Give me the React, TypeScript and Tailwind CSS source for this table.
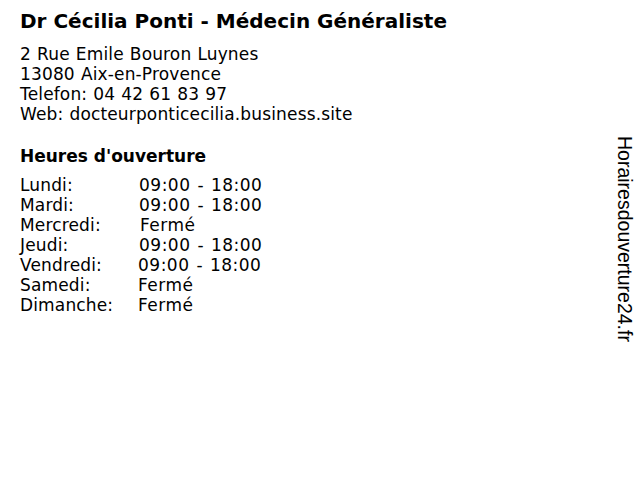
import React from 'react';

const hours: { day: string; time: string; pad: string }[] = [
  { day: 'Lundi:', time: '09:00 - 18:00', pad: 'pl-[119px]' },
  { day: 'Mardi:', time: '09:00 - 18:00', pad: 'pl-[119px]' },
  { day: 'Mercredi:', time: 'Fermé', pad: 'pl-[120px]' },
  { day: 'Jeudi:', time: '09:00 - 18:00', pad: 'pl-[119px]' },
  { day: 'Vendredi:', time: '09:00 - 18:00', pad: 'pl-[118px]' },
  { day: 'Samedi:', time: 'Fermé', pad: 'pl-[118px]' },
  { day: 'Dimanche:', time: 'Fermé', pad: 'pl-[118px]' }
];

export default function App() {
  return (
    <div className="relative h-[480px] w-[640px] overflow-hidden bg-white text-black font-['DejaVu_Sans',sans-serif]">
      <div className="px-5 pt-[9px]">
        <h1 className="text-[20px] font-bold leading-[24px]">Dr Cécilia Ponti - Médecin Généraliste</h1>
        <div className="mt-[11px] text-[17px] leading-[20px] tracking-[0.15px] [word-spacing:0.5px]">
          <p>2 Rue Emile Bouron Luynes</p>
          <p>13080 Aix-en-Provence</p>
          <p>Telefon: 04 42 61 83 97</p>
          <p>Web: docteurponticecilia.business.site</p>
        </div>
        <h2 className="mt-[22px] text-[17px] font-bold leading-[20px]">Heures d'ouverture</h2>
        <div className="mt-[9px] text-[17px] leading-[20px]">
          {hours.map(row => (
            <div key={row.day} className="relative h-[20px]">
              <span className="absolute left-0 top-0 tracking-[0.15px]">{row.day}</span>
              <span className={`absolute left-0 top-0 whitespace-nowrap tracking-[0.5px] [word-spacing:1px] ${row.pad}`}>{row.time}</span>
            </div>
          ))}
        </div>
      </div>
      <div className="absolute left-[615px] top-[136px] origin-top-left translate-x-[20px] rotate-90 whitespace-nowrap font-['Liberation_Sans',sans-serif] text-[19.5px] leading-[20px]">
        Horairesdouverture24.fr
      </div>
    </div>
  );
}
